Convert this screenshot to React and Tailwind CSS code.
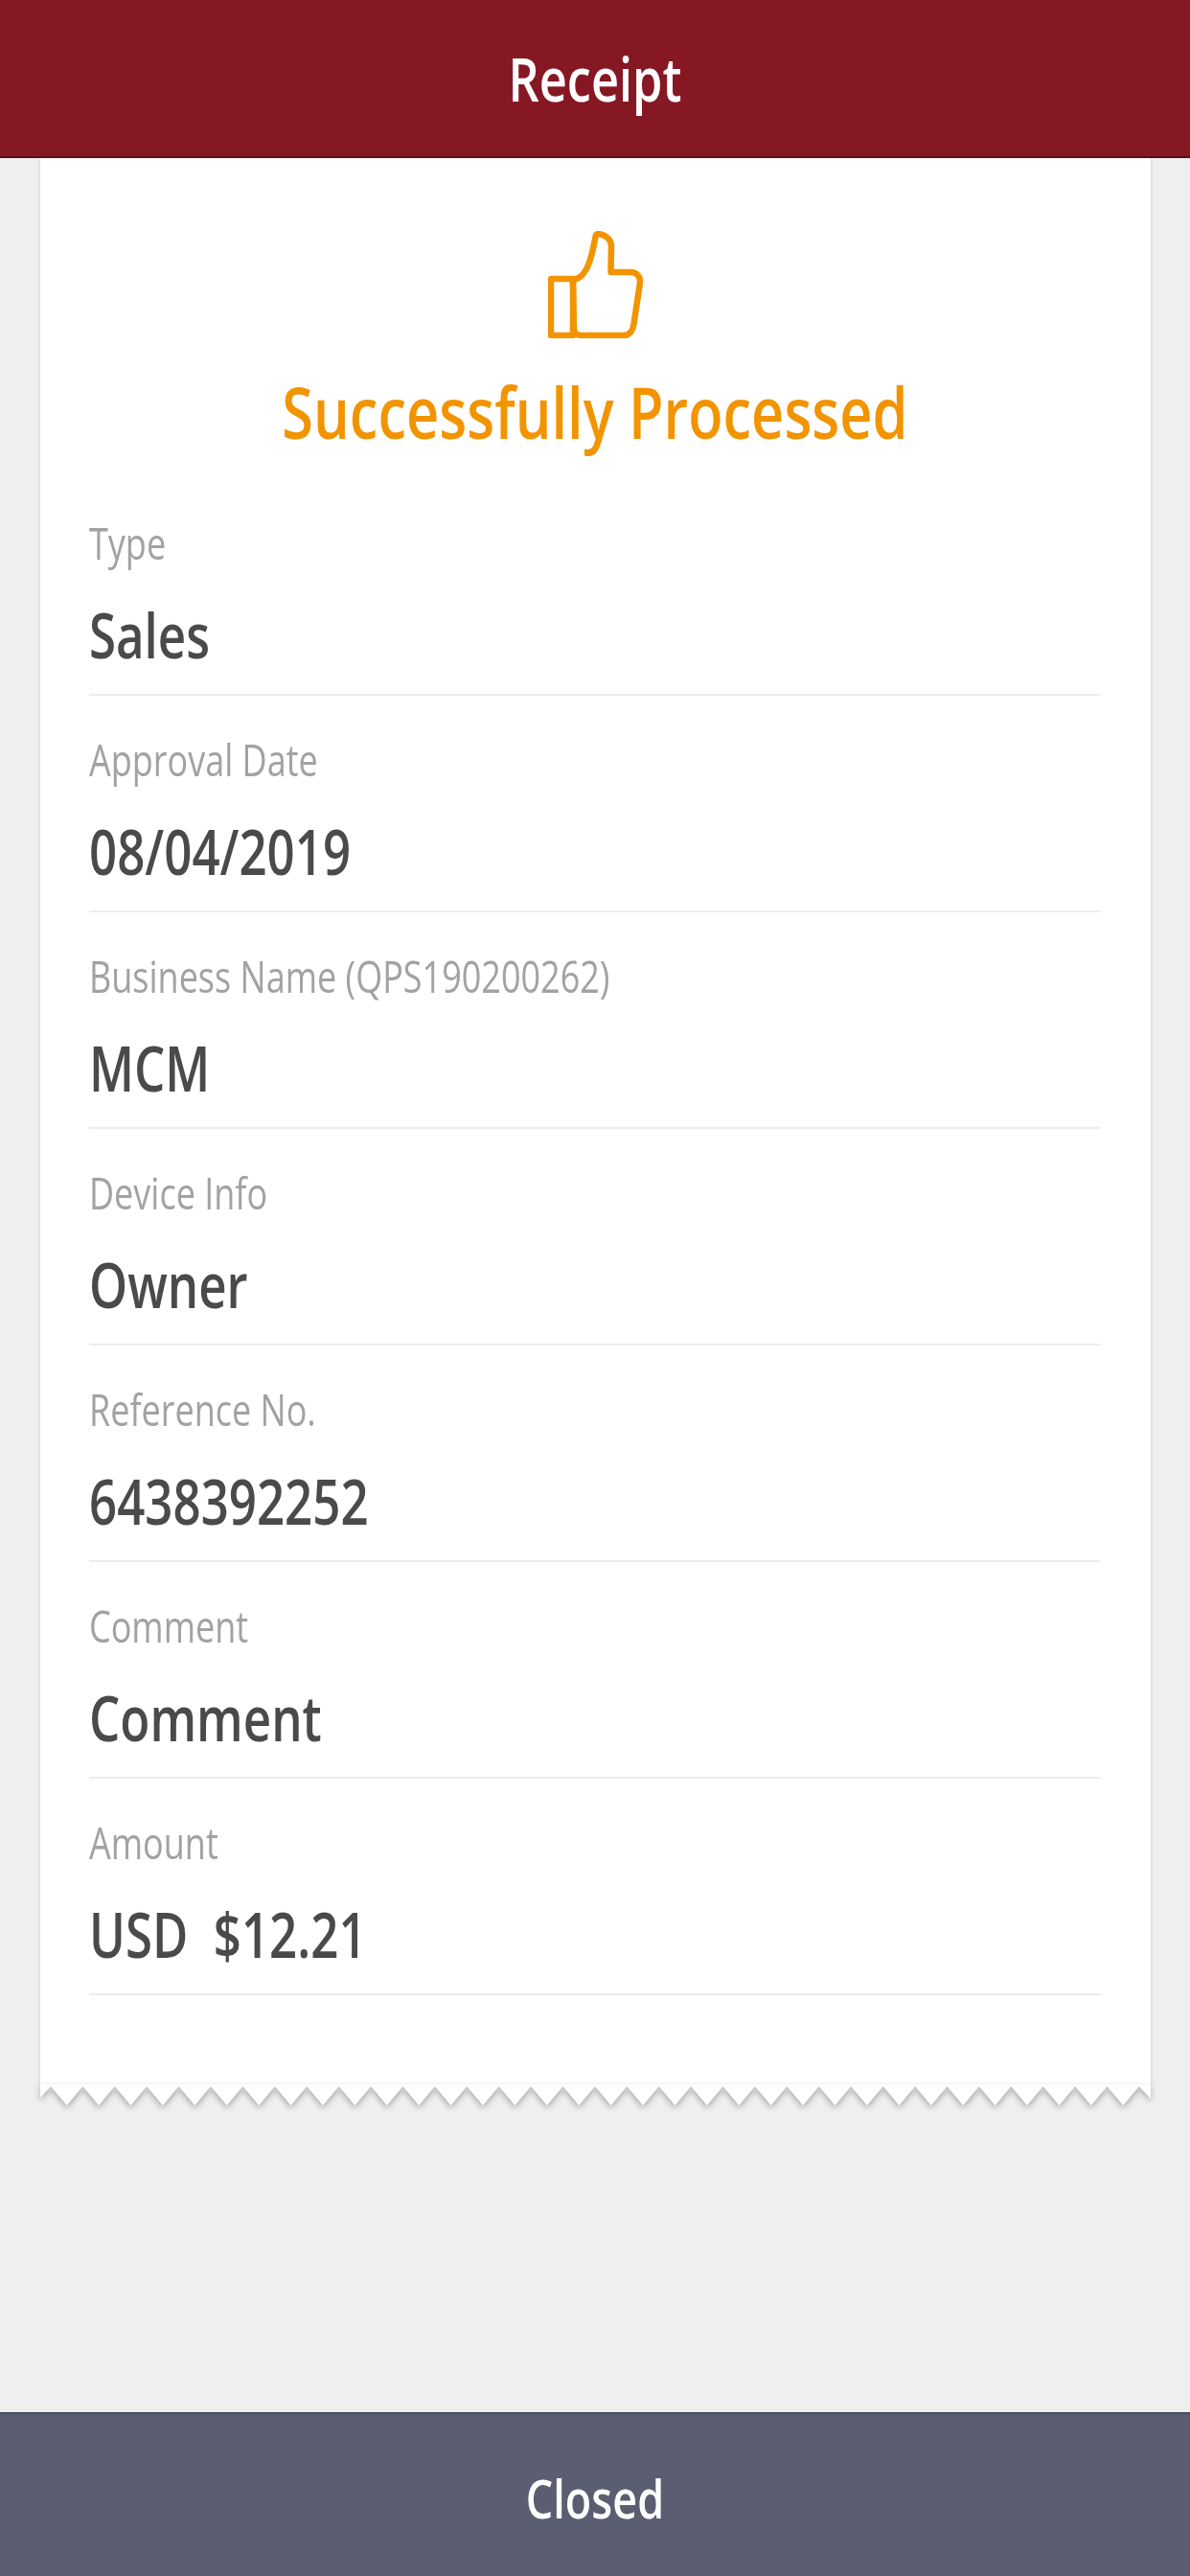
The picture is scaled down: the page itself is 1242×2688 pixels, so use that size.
const rows = [
  ["Type", "Sales"],
  ["Approval Date", "08/04/2019"],
  ["Business Name (QPS190200262)", "MCM"],
  ["Device Info", "Owner"],
  ["Reference No.", "6438392252"],
  ["Comment", "Comment"],
  ["Amount", "USD\u00a0\u00a0$12.21"],
];

function ThumbIcon() {
  return (
    <svg viewBox="0 0 99 112" className="block h-[112px] w-[99px]" fill="none" stroke="#f29400" strokeWidth="6.5" strokeLinejoin="round" aria-hidden="true">
      <rect x="3" y="50" width="23" height="59" />
      <path d="M26 51C34 50 40 42 43 33C46 24 48 14 49.5 6C50 3 52 2.5 55 3.5C61 5 66 9 66 16L65.5 43L86 43C93 43 96.5 48 96 54L89.5 97C88.5 104 85 109 79 109L35 109C30 109 27 106 27 102Z" />
    </svg>
  );
}

function Teeth() {
  const period = 33.41;
  const pts = ["0,-2", "0,12"];
  for (let i = 0; i < 35; i++) {
    const peak = 11 + i * period;
    pts.push(`${peak.toFixed(1)},0`);
    if (peak + 16.7 < 1159) pts.push(`${(peak + 16.7).toFixed(1)},20`);
  }
  pts.push("1159,13", "1159,-2");
  return (
    <svg viewBox="0 -2 1159 30" className="-mt-[2px] block h-[30px] w-[1159px] overflow-visible drop-shadow-[0_3px_3px_rgba(0,0,0,0.3)]" aria-hidden="true">
      <polygon points={pts.join(" ")} fill="#ffffff" />
    </svg>
  );
}

function Row({ label, value }) {
  return (
    <div className="h-[226px] border-b-2 border-[#ececec]">
      <div className="h-[118px] pt-[36px]">
        <span className="block w-fit origin-top scale-y-[1.26] whitespace-nowrap text-[36px] leading-[50px] text-[#a2a2a2]">{label}</span>
      </div>
      <span className="block w-fit origin-top scale-y-[1.26] whitespace-nowrap text-[51px] font-semibold leading-[70px] text-[#4a4a4a]">{value}</span>
    </div>
  );
}

export default function App() {
  return (
    <div className="flex h-[2688px] w-[1242px] flex-col overflow-hidden bg-[#efefef] font-['Open_Sans',sans-serif]">
      <header className="z-10 flex h-[165px] shrink-0 items-center justify-center border-b-2 border-[#5c0f17] bg-[#861824]">
        <span className="inline-block scale-y-[1.26] text-[50.5px] font-semibold text-white">Receipt</span>
      </header>
      <main className="min-h-0 flex-1">
        <div className="ml-[42px] w-[1159px]">
          <div className="h-[2012px] bg-white pl-[51px] pr-[52px] shadow-[-1px_0_4px_rgba(0,0,0,0.08),1px_0_4px_rgba(0,0,0,0.08)]">
            <div className="flex flex-col items-center pt-[76px]">
              <ThumbIcon />
              <span className="mt-[26px] block origin-top scale-y-[1.26] whitespace-nowrap text-[59.5px] font-semibold leading-[80px] text-[#f29400]">Successfully Processed</span>
            </div>
            <div className="mt-[41px]">
              {rows.map(([l, v]) => (
                <Row key={l} label={l} value={v} />
              ))}
            </div>
          </div>
          <Teeth />
        </div>
      </main>
      <footer className="flex h-[171px] shrink-0 items-center justify-center border-t-2 border-[#4b4d5c] bg-[#5b5e70] pt-[6px]">
        <span className="inline-block scale-y-[1.26] text-[45px] font-semibold text-white">Closed</span>
      </footer>
    </div>
  );
}
